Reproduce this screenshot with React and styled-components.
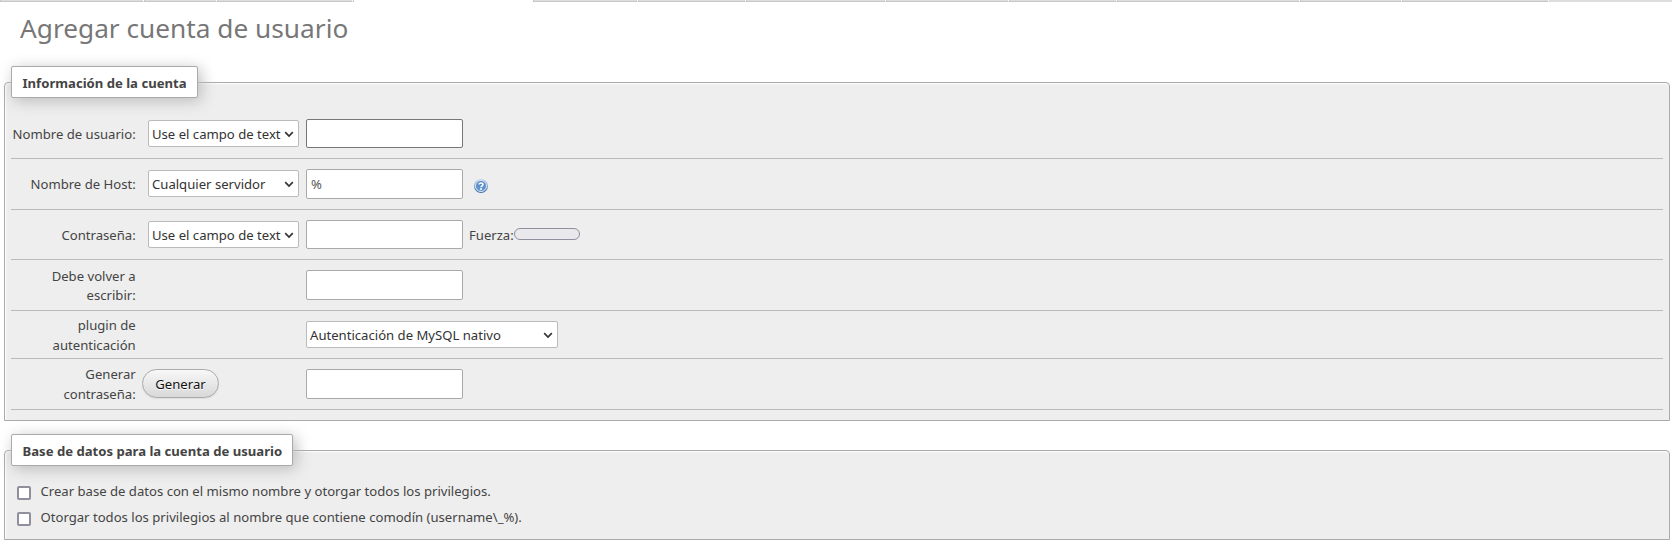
import React from "react";
import styled, { createGlobalStyle } from "styled-components";

const GlobalStyle = createGlobalStyle`
  * { box-sizing: border-box; }
  body {
    margin: 0;
    background: #fff;
    color: #444;
    font: 13.12px/20px "Noto Sans", sans-serif;
    overflow: hidden;
  }
`;

const Page = styled.main`
  height: 540px;
  overflow: hidden;
`;

const TabStrip = styled.nav`
  display: flex;
  height: 2px;
`;

const TabEdge = styled.span`
  width: ${(p) => p.$width}px;
  flex: none;
  border-left: 1px solid ${(p) => (p.$last ? "#ddd" : "#c8c8c8")};
  border-right: 1px solid #fff;
  border-bottom: ${(p) => (p.$active ? 0 : 1)}px solid ${(p) => (p.$last ? "#ddd" : "#c8c8c8")};
  background: ${(p) => (p.$active ? "#fff" : "#ddd")};
`;

const Title = styled.h2`
  margin: 6px 0 0 20px;
  height: 41px;
  font-size: 26.24px;
  line-height: 40px;
  font-weight: 400;
  color: #777;
`;

const Panel = styled.section`
  width: 1666px;
  height: ${(p) => p.$height}px;
  margin: ${(p) => p.$top}px 0 0 4px;
  padding: 0 6px;
  border: 1px solid #aaa;
  border-radius: 4px 4px 0 0;
  background: #eee;
  box-shadow: inset 1px 1px 2px #fff;
`;

const Legend = styled.h3`
  width: ${(p) => p.$width}px;
  height: 32px;
  margin: -17px 0 0;
  padding: 0 0 0 10.5px;
  border: 1px solid #aaa;
  border-radius: 2px;
  background: #fff;
  box-shadow: 3px 3px 15px #bbb;
  font-size: 13.12px;
  line-height: 32px;
  font-weight: 700;
  white-space: nowrap;
`;

const Fields = styled.div`
  padding-top: 10px;
`;

const Row = styled.div`
  display: flex;
  align-items: flex-start;
  height: ${(p) => p.$height}px;
  padding-top: ${(p) => p.$pad}px;
  border-bottom: 1px solid #bbb;
`;

const Label = styled.label`
  width: 125px;
  flex: none;
  margin-top: ${(p) => p.$shift || 0}px;
  padding-right: 0.3px;
  line-height: ${(p) => p.$leading || 20}px;
  text-align: right;
  white-space: pre;
`;

const Method = styled.div`
  width: 170px;
  flex: none;
  padding-left: ${(p) => p.$indent || 12}px;
`;

const SelectBox = styled.div`
  display: flex;
  align-items: center;
  justify-content: space-between;
  width: ${(p) => p.$width}px;
  height: 27px;
  margin-top: 1px;
  padding: 0 4px 0 3px;
  border: 1px solid #bbb;
  border-radius: 2px;
  background: #fff;
  color: #333;
  white-space: nowrap;

  svg {
    flex: none;
    margin-top: 1px;
  }
`;

const TextInput = styled.input`
  width: 157px;
  height: ${(p) => p.$height || 30}px;
  padding: 0 4px;
  border: 1px solid ${(p) => (p.$focused ? "#777" : "#aaa")};
  border-radius: 2px;
  outline: none;
  background: #fff;
  color: #555;
  font: inherit;
`;

const HelpIcon = styled.svg`
  margin: 9px 0 0 10px;
`;

const StrengthLabel = styled.span`
  margin: 5px 0 0 6px;
`;

const Strength = styled.div`
  width: 66px;
  height: 12px;
  margin-top: 8px;
  border: 1px solid #8f8f9d;
  border-radius: 6px;
  background: #e9e9ed;
`;

const Button = styled.button`
  width: 77px;
  height: 29px;
  padding: 0;
  border: 1px solid #aaa;
  border-radius: 15px;
  background: linear-gradient(#f8f8f8, #d8d8d8);
  box-shadow: 0 1px 1px #ddd;
  color: #111;
  font: inherit;
  text-shadow: 0 1px 0 #fff;
`;

const Options = styled.div`
  display: grid;
  gap: 6px;
  padding: 15px 0 0 5px;
`;

const Option = styled.label`
  display: flex;
  align-items: flex-start;
  height: 20px;
`;

const CheckBox = styled.input`
  appearance: none;
  width: 14px;
  height: 14px;
  margin: 5px 9.5px 0 1px;
  border: 2px solid #8f8f9d;
  border-radius: 2px;
  background: #fff;
`;

const TABS = [144, 73, 136, 180, 105, 108, 140, 123, 108, 183, 102, 147, 124];

function Select({ width, children }) {
  return (
    <SelectBox $width={width}>
      <span>{children}</span>
      <svg width="10" height="7" viewBox="0 0 10 7">
        <path d="M1.2 1.2 5 5 8.8 1.2" fill="none" stroke="#333" strokeWidth="1.7" />
      </svg>
    </SelectBox>
  );
}

function Help() {
  return (
    <HelpIcon width="16" height="16" viewBox="0 0 16 16">
      <defs>
        <linearGradient id="ring" x1="0" y1="0" x2="0" y2="1">
          <stop offset="0" stopColor="#c3d9f1" />
          <stop offset="1" stopColor="#3f6ca8" />
        </linearGradient>
        <linearGradient id="disc" x1="0" y1="0" x2="0" y2="1">
          <stop offset="0" stopColor="#4f83c0" />
          <stop offset="1" stopColor="#6b9bd0" />
        </linearGradient>
      </defs>
      <circle cx="8" cy="8" r="7" fill="url(#ring)" />
      <circle cx="8" cy="8" r="5.5" fill="url(#disc)" stroke="#dbe8f6" strokeWidth="1" />
      <path d="M6 6.4C6 4.6 10 4.6 10 6.5 10 7.8 8 7.8 8 9.2" fill="none" stroke="#fff" strokeWidth="1.6" />
      <rect x="7.1" y="10.2" width="1.8" height="1.6" fill="#fff" />
    </HelpIcon>
  );
}

export default function App() {
  return (
    <Page>
      <GlobalStyle />
      <TabStrip>
        {TABS.map((w, i) => (
          <TabEdge key={i} $width={w} $active={i === 3} $last={i === 12} />
        ))}
      </TabStrip>
      <Title>Agregar cuenta de usuario</Title>

      <Panel $top={33} $height={339}>
        <Legend $width={187}>Información de la cuenta</Legend>
        <Fields>
          <Row $height={51} $pad={11}>
            <Label $shift={5}>Nombre de usuario:</Label>
            <Method><Select width={151}>Use el campo de text</Select></Method>
            <TextInput $focused $height={29} />
          </Row>
          <Row $height={51} $pad={10}>
            <Label $shift={5}>Nombre de Host:</Label>
            <Method><Select width={151}>Cualquier servidor</Select></Method>
            <TextInput defaultValue="%" />
            <Help />
          </Row>
          <Row $height={50} $pad={10}>
            <Label $shift={5}>Contraseña:</Label>
            <Method><Select width={151}>Use el campo de text</Select></Method>
            <TextInput $height={29} />
            <StrengthLabel>Fuerza:</StrengthLabel>
            <Strength />
          </Row>
          <Row $height={51} $pad={10}>
            <Label $shift={-3.5} $leading={19}>{"Debe volver a\nescribir:"}</Label>
            <Method />
            <TextInput />
          </Row>
          <Row $height={48} $pad={9}>
            <Label $shift={-5}>{"plugin de\nautenticación"}</Label>
            <Method />
            <Select width={252}>Autenticación de MySQL nativo</Select>
          </Row>
          <Row $height={51} $pad={10}>
            <Label $shift={-5}>{"Generar\ncontraseña:"}</Label>
            <Method $indent={6}><Button type="button">Generar</Button></Method>
            <TextInput />
          </Row>
        </Fields>
      </Panel>

      <Panel $top={29} $height={90}>
        <Legend $width={282}>Base de datos para la cuenta de usuario</Legend>
        <Options>
          <Option>
            <CheckBox type="checkbox" />
            Crear base de datos con el mismo nombre y otorgar todos los privilegios.
          </Option>
          <Option>
            <CheckBox type="checkbox" />
            Otorgar todos los privilegios al nombre que contiene comodín (username\_%).
          </Option>
        </Options>
      </Panel>
    </Page>
  );
}
